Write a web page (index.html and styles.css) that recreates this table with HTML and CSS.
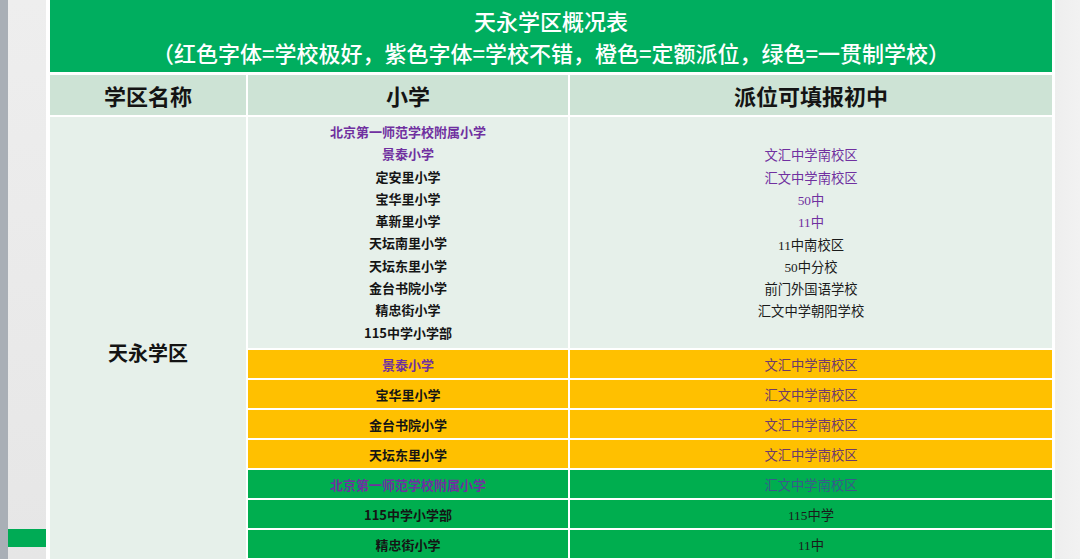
FILE: index.html
```html
<!DOCTYPE html>
<html lang="zh">
<head>
<meta charset="utf-8">
<title>天永学区概况表</title>
<link rel="stylesheet" href="styles.css">
</head>
<body>
<div class="page">
  <div class="strip"></div>
  <div class="side-left">
    <div class="side-mark"></div>
  </div>
  <div class="slide">
    <div class="table">
      <div class="title">
        <div>天永学区概况表</div>
        <div>（红色字体=学校极好，紫色字体=学校不错，橙色=定额派位，绿色=一贯制学校）</div>
      </div>
      <div class="th">学区名称</div>
      <div class="th">小学</div>
      <div class="th">派位可填报初中</div>

      <div class="district">天永学区</div>

      <div class="cell list primary">
        <div class="purple">北京第一师范学校附属小学</div>
        <div class="purple">景泰小学</div>
        <div>定安里小学</div>
        <div>宝华里小学</div>
        <div>革新里小学</div>
        <div>天坛南里小学</div>
        <div>天坛东里小学</div>
        <div>金台书院小学</div>
        <div>精忠街小学</div>
        <div>115中学小学部</div>
      </div>
      <div class="cell list middle">
        <div class="purple">文汇中学南校区</div>
        <div class="purple">汇文中学南校区</div>
        <div class="purple">50中</div>
        <div class="purple">11中</div>
        <div>11中南校区</div>
        <div>50中分校</div>
        <div>前门外国语学校</div>
        <div>汇文中学朝阳学校</div>
      </div>

      <div class="cell orange primary purple">景泰小学</div>
      <div class="cell orange middle muted">文汇中学南校区</div>
      <div class="cell orange primary">宝华里小学</div>
      <div class="cell orange middle muted">汇文中学南校区</div>
      <div class="cell orange primary">金台书院小学</div>
      <div class="cell orange middle muted">文汇中学南校区</div>
      <div class="cell orange primary">天坛东里小学</div>
      <div class="cell orange middle muted">文汇中学南校区</div>

      <div class="cell green primary purple">北京第一师范学校附属小学</div>
      <div class="cell green middle teal">汇文中学南校区</div>
      <div class="cell green primary">115中学小学部</div>
      <div class="cell green middle">115中学</div>
      <div class="cell green primary">精忠街小学</div>
      <div class="cell green middle">11中</div>
      <div class="cell green primary"></div>
      <div class="cell green middle"></div>
    </div>
  </div>
  <div class="side-right"></div>
</div>
</body>
</html>
```

FILE: styles.css
```css
html, body {
  margin: 0;
  padding: 0;
  height: 559px;
  overflow: hidden;
}

body {
  background: #efefef;
  font-family: "Noto Sans CJK SC", "Noto Sans", sans-serif;
  color: #111;
}

.page {
  display: flex;
  height: 559px;
  align-items: flex-start;
}

.strip {
  width: 8px;
  height: 559px;
  background: #a9afb6;
  flex: none;
}

.side-left {
  width: 38px;
  height: 559px;
  background: linear-gradient(180deg, #eeeeee 0%, #e6e6e6 100%);
  flex: none;
  display: flex;
  flex-direction: column;
  justify-content: flex-end;
  padding-bottom: 12px;
  box-sizing: border-box;
}

.side-mark {
  width: 41px;
  height: 18px;
  background: #00ab55;
}

.slide {
  background: #ffffff;
  padding: 0 3px 0 4px;
  flex: none;
}

.table {
  display: grid;
  grid-template-columns: 196px 320px 482px;
  gap: 2px;
  background: #ffffff;
}

.title {
  grid-column: 1 / 4;
  background: #00ae5f;
  color: #ffffff;
  font-size: 22px;
  font-weight: 500;
  line-height: 32px;
  text-align: center;
  padding: 4px 0 4px;
  margin-bottom: 1px;
}

.th {
  background: #cde3d5;
  height: 40px;
  display: flex;
  align-items: center;
  justify-content: center;
  font-size: 22px;
  font-weight: 700;
  color: #141414;
}

.district {
  grid-column: 1;
  grid-row: 3 / span 9;
  background: #e6f0ea;
  display: flex;
  align-items: center;
  justify-content: center;
  font-size: 20px;
  font-weight: 700;
  color: #141414;
}

.cell {
  display: flex;
  align-items: center;
  justify-content: center;
  height: 28px;
  font-size: 13px;
  text-align: center;
}

.cell.list {
  height: 231px;
  background: #e6f0ea;
  flex-direction: column;
  line-height: 22.3px;
}

.cell.list.primary {
  justify-content: flex-start;
  padding-top: 4px;
  box-sizing: border-box;
}

.cell.list.middle {
  padding-top: 4px;
  box-sizing: border-box;
}

.primary {
  font-weight: 700;
  color: #151515;
}

.middle {
  font-family: "Liberation Serif", "Noto Sans CJK SC", serif;
  font-size: 13.3px;
  font-weight: 400;
  color: #1a1a1a;
}

.orange {
  background: #ffc000;
}

.green {
  background: #00ae4f;
}

.purple,
.cell .purple {
  color: #7030a0;
}

.cell.muted {
  color: #6e3a6a;
}

.cell.teal {
  color: #3a5a8a;
}

.side-right {
  flex: 1;
  height: 559px;
  background: linear-gradient(90deg, #eeeeee 0%, #f2f2f2 100%);
}
```
